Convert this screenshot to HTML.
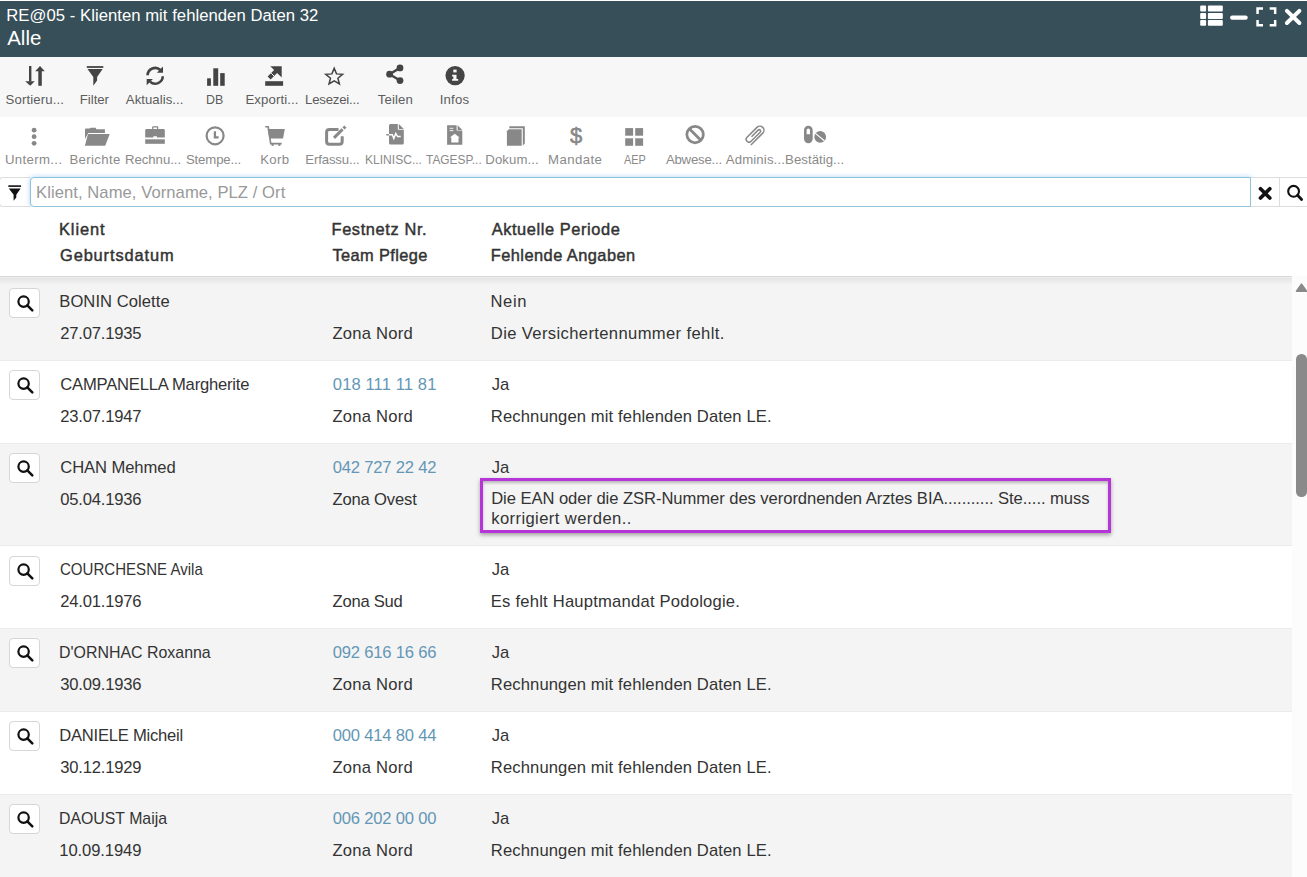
<!DOCTYPE html>
<html><head><meta charset="utf-8"><style>
html,body{margin:0;padding:0;width:1307px;height:877px;overflow:hidden;background:#fff;font-family:"Liberation Sans", sans-serif}
.t{position:absolute;white-space:nowrap}
svg{display:block}
</style></head><body>
<div style="position:absolute;left:0;top:1px;width:1307px;height:56px;background:#374f58"></div>
<div class="t" style="left:6.30px;top:8.20px;font-size:16.7px;line-height:16.7px;color:#fff;font-weight:400;letter-spacing:0.026px;">RE@05 - Klienten mit fehlenden Daten 32</div>
<div class="t" style="left:7.20px;top:28.20px;font-size:20.4px;line-height:20.4px;color:#fff;font-weight:400;letter-spacing:0.046px;">Alle</div>
<svg style="position:absolute;left:1195px;top:0" width="112" height="35" viewBox="0 0 112 35" fill="#fff">
<rect x="5.2" y="5.6" width="5.9" height="6" rx="1"/><rect x="5.2" y="12.9" width="5.9" height="6" rx="1"/><rect x="5.2" y="20.1" width="5.9" height="5.6" rx="1"/>
<rect x="12.9" y="5.6" width="14.9" height="6" rx="1"/><rect x="12.9" y="12.9" width="14.9" height="6" rx="1"/><rect x="12.9" y="20.1" width="14.9" height="5.6" rx="1"/>
<rect x="35.1" y="15.4" width="17.6" height="4.3" rx="2"/>
<path d="M61.3 14V7.3H68V9.8H63.8V14z M81.4 14V7.3H74.7V9.8H78.9V14z M61.3 19.9V26.6H68V24.1H63.8V19.9z M81.4 19.9V26.6H74.7V24.1H78.9V19.9z"/>
<path d="M91.9 10.9L104.4 23M104.4 10.9L91.9 23" stroke="#fff" stroke-width="4" stroke-linecap="round"/>
</svg>
<div style="position:absolute;left:0;top:57px;width:1307px;height:60px;background:#f7f7f7"></div>
<div class="t" style="left:5.50px;top:92.90px;font-size:13.2px;line-height:13.2px;color:#5c5c5c;font-weight:400;letter-spacing:0.130px;">Sortieru...</div>
<div class="t" style="left:79.80px;top:92.90px;font-size:13.2px;line-height:13.2px;color:#5c5c5c;font-weight:400;letter-spacing:-0.023px;">Filter</div>
<div class="t" style="left:125.80px;top:92.90px;font-size:13.2px;line-height:13.2px;color:#5c5c5c;font-weight:400;letter-spacing:0.040px;">Aktualis...</div>
<div class="t" style="left:205.66px;top:92.90px;font-size:13.2px;line-height:13.2px;color:#5c5c5c;font-weight:400;transform:scaleX(0.9416);transform-origin:0 0;">DB</div>
<div class="t" style="left:245.40px;top:92.90px;font-size:13.2px;line-height:13.2px;color:#5c5c5c;font-weight:400;letter-spacing:0.114px;">Exporti...</div>
<div class="t" style="left:305.10px;top:92.90px;font-size:13.2px;line-height:13.2px;color:#5c5c5c;font-weight:400;letter-spacing:-0.209px;">Lesezei...</div>
<div class="t" style="left:377.70px;top:92.90px;font-size:13.2px;line-height:13.2px;color:#5c5c5c;font-weight:400;letter-spacing:0.156px;">Teilen</div>
<div class="t" style="left:439.70px;top:92.90px;font-size:13.2px;line-height:13.2px;color:#5c5c5c;font-weight:400;letter-spacing:0.201px;">Infos</div>
<div class="t" style="left:4.90px;top:152.90px;font-size:13.2px;line-height:13.2px;color:#8a8a8a;font-weight:400;letter-spacing:0.367px;">Unterm...</div>
<div class="t" style="left:69.40px;top:152.90px;font-size:13.2px;line-height:13.2px;color:#8a8a8a;font-weight:400;letter-spacing:0.351px;">Berichte</div>
<div class="t" style="left:124.90px;top:152.90px;font-size:13.2px;line-height:13.2px;color:#8a8a8a;font-weight:400;letter-spacing:-0.023px;">Rechnu...</div>
<div class="t" style="left:185.90px;top:152.90px;font-size:13.2px;line-height:13.2px;color:#8a8a8a;font-weight:400;letter-spacing:-0.134px;">Stempe...</div>
<div class="t" style="left:260.20px;top:152.90px;font-size:13.2px;line-height:13.2px;color:#8a8a8a;font-weight:400;letter-spacing:0.326px;">Korb</div>
<div class="t" style="left:305.30px;top:152.90px;font-size:13.2px;line-height:13.2px;color:#8a8a8a;font-weight:400;letter-spacing:-0.148px;">Erfassu...</div>
<div class="t" style="left:365.19px;top:152.90px;font-size:13.2px;line-height:13.2px;color:#8a8a8a;font-weight:400;transform:scaleX(0.9138);transform-origin:0 0;">KLINISC...</div>
<div class="t" style="left:426.10px;top:152.90px;font-size:13.2px;line-height:13.2px;color:#8a8a8a;font-weight:400;transform:scaleX(0.9012);transform-origin:0 0;">TAGESP...</div>
<div class="t" style="left:485.30px;top:152.90px;font-size:13.2px;line-height:13.2px;color:#8a8a8a;font-weight:400;letter-spacing:0.100px;">Dokum...</div>
<div class="t" style="left:548.00px;top:152.90px;font-size:13.2px;line-height:13.2px;color:#8a8a8a;font-weight:400;letter-spacing:0.419px;">Mandate</div>
<div class="t" style="left:623.50px;top:152.90px;font-size:13.2px;line-height:13.2px;color:#8a8a8a;font-weight:400;transform:scaleX(0.8273);transform-origin:0 0;">AEP</div>
<div class="t" style="left:665.90px;top:152.90px;font-size:13.2px;line-height:13.2px;color:#8a8a8a;font-weight:400;letter-spacing:-0.218px;">Abwese...</div>
<div class="t" style="left:725.80px;top:152.90px;font-size:13.2px;line-height:13.2px;color:#8a8a8a;font-weight:400;letter-spacing:0.130px;">Adminis...</div>
<div class="t" style="left:785.10px;top:152.90px;font-size:13.2px;line-height:13.2px;color:#8a8a8a;font-weight:400;letter-spacing:0.042px;">Bestätig...</div>
<div style="position:absolute;left:-1px;top:177px;width:31px;height:30px;box-sizing:border-box;border:1px solid #ddd;border-right:none;border-radius:4px 0 0 4px;background:#fff"></div>
<div style="position:absolute;left:29.5px;top:177px;width:1221px;height:30px;box-sizing:border-box;border:1px solid #8fc3d9;border-radius:4px 0 0 4px;background:#fff;box-shadow:0 0 5px rgba(102,175,233,.55)"></div>
<div class="t" style="left:36.00px;top:184.70px;font-size:16.6px;line-height:16.6px;color:#999;font-weight:400;letter-spacing:0.069px;">Klient, Name, Vorname, PLZ / Ort</div>
<div style="position:absolute;left:1251px;top:177px;width:29px;height:30px;box-sizing:border-box;border:1px solid #ddd;border-left:none;background:#fff"></div>
<div style="position:absolute;left:1279px;top:177px;width:30px;height:30px;box-sizing:border-box;border:1px solid #ddd;background:#fff"></div>
<div style="position:absolute;left:0;top:207px;width:1292px;height:69px;background:#fff"></div>
<div class="t" style="left:59.00px;top:220.70px;font-size:16.4px;line-height:16.4px;color:#333;font-weight:400;letter-spacing:0.911px;-webkit-text-stroke:0.45px #333;">Klient</div>
<div class="t" style="left:60.00px;top:246.80px;font-size:16.4px;line-height:16.4px;color:#333;font-weight:400;letter-spacing:0.881px;-webkit-text-stroke:0.45px #333;">Geburtsdatum</div>
<div class="t" style="left:331.50px;top:220.70px;font-size:16.4px;line-height:16.4px;color:#333;font-weight:400;letter-spacing:0.618px;-webkit-text-stroke:0.45px #333;">Festnetz Nr.</div>
<div class="t" style="left:332.50px;top:246.80px;font-size:16.4px;line-height:16.4px;color:#333;font-weight:400;letter-spacing:0.371px;-webkit-text-stroke:0.45px #333;">Team Pflege</div>
<div class="t" style="left:491.70px;top:220.70px;font-size:16.4px;line-height:16.4px;color:#333;font-weight:400;letter-spacing:0.584px;-webkit-text-stroke:0.45px #333;">Aktuelle Periode</div>
<div class="t" style="left:490.70px;top:246.80px;font-size:16.4px;line-height:16.4px;color:#333;font-weight:400;letter-spacing:0.459px;-webkit-text-stroke:0.45px #333;">Fehlende Angaben</div>
<div style="position:absolute;left:0;top:278px;width:1292px;height:83px;box-sizing:border-box;background:#f4f4f4;border-bottom:1px solid #ebebeb"></div>
<div style="position:absolute;left:9px;top:288px;width:31px;height:30px;box-sizing:border-box;border:1px solid #d6d6d6;border-radius:4px;background:#fff"></div>
<svg style="position:absolute;left:9px;top:288px" width="31" height="30" viewBox="0 0 31 30"><circle cx="14.6" cy="13.6" r="5.2" fill="none" stroke="#111" stroke-width="2.2"/><path d="M18.3 17.4 L23.3 22.4" stroke="#111" stroke-width="2.6" stroke-linecap="round"/></svg>
<div class="t" style="left:59.30px;top:293.50px;font-size:16.6px;line-height:16.6px;color:#333;font-weight:400;letter-spacing:0.049px;">BONIN Colette</div>
<div class="t" style="left:60.30px;top:325.60px;font-size:16.6px;line-height:16.6px;color:#333;font-weight:400;letter-spacing:-0.213px;">27.07.1935</div>
<div class="t" style="left:332.50px;top:325.60px;font-size:16.6px;line-height:16.6px;color:#333;font-weight:400;letter-spacing:0.216px;">Zona Nord</div>
<div class="t" style="left:490.50px;top:293.50px;font-size:16.6px;line-height:16.6px;color:#333;font-weight:400;letter-spacing:0.634px;">Nein</div>
<div class="t" style="left:490.80px;top:325.60px;font-size:16.6px;line-height:16.6px;color:#333;font-weight:400;letter-spacing:0.369px;">Die Versichertennummer fehlt.</div>
<div style="position:absolute;left:0;top:361px;width:1292px;height:83px;box-sizing:border-box;background:#ffffff;border-bottom:1px solid #ebebeb"></div>
<div style="position:absolute;left:9px;top:370px;width:31px;height:30px;box-sizing:border-box;border:1px solid #d6d6d6;border-radius:4px;background:#fff"></div>
<svg style="position:absolute;left:9px;top:370px" width="31" height="30" viewBox="0 0 31 30"><circle cx="14.6" cy="13.6" r="5.2" fill="none" stroke="#111" stroke-width="2.2"/><path d="M18.3 17.4 L23.3 22.4" stroke="#111" stroke-width="2.6" stroke-linecap="round"/></svg>
<div class="t" style="left:60.30px;top:376.50px;font-size:16.6px;line-height:16.6px;color:#333;font-weight:400;letter-spacing:-0.213px;">CAMPANELLA Margherite</div>
<div class="t" style="left:60.30px;top:408.60px;font-size:16.6px;line-height:16.6px;color:#333;font-weight:400;letter-spacing:-0.213px;">23.07.1947</div>
<div class="t" style="left:332.80px;top:376.50px;font-size:16.6px;line-height:16.6px;color:#6497b6;font-weight:400;letter-spacing:0.101px;">018 111 11 81</div>
<div class="t" style="left:332.50px;top:408.60px;font-size:16.6px;line-height:16.6px;color:#333;font-weight:400;letter-spacing:0.216px;">Zona Nord</div>
<div class="t" style="left:491.70px;top:376.50px;font-size:16.6px;line-height:16.6px;color:#333;font-weight:400;">Ja</div>
<div class="t" style="left:490.80px;top:408.60px;font-size:16.6px;line-height:16.6px;color:#333;font-weight:400;letter-spacing:0.123px;">Rechnungen mit fehlenden Daten LE.</div>
<div style="position:absolute;left:0;top:444px;width:1292px;height:102px;box-sizing:border-box;background:#f4f4f4;border-bottom:1px solid #ebebeb"></div>
<div style="position:absolute;left:9px;top:453px;width:31px;height:30px;box-sizing:border-box;border:1px solid #d6d6d6;border-radius:4px;background:#fff"></div>
<svg style="position:absolute;left:9px;top:453px" width="31" height="30" viewBox="0 0 31 30"><circle cx="14.6" cy="13.6" r="5.2" fill="none" stroke="#111" stroke-width="2.2"/><path d="M18.3 17.4 L23.3 22.4" stroke="#111" stroke-width="2.6" stroke-linecap="round"/></svg>
<div class="t" style="left:60.30px;top:459.50px;font-size:16.6px;line-height:16.6px;color:#333;font-weight:400;letter-spacing:-0.086px;">CHAN Mehmed</div>
<div class="t" style="left:60.30px;top:491.60px;font-size:16.6px;line-height:16.6px;color:#333;font-weight:400;letter-spacing:-0.213px;">05.04.1936</div>
<div class="t" style="left:332.80px;top:459.50px;font-size:16.6px;line-height:16.6px;color:#6497b6;font-weight:400;letter-spacing:-0.207px;">042 727 22 42</div>
<div class="t" style="left:332.50px;top:491.60px;font-size:16.6px;line-height:16.6px;color:#333;font-weight:400;letter-spacing:-0.162px;">Zona Ovest</div>
<div class="t" style="left:491.70px;top:459.50px;font-size:16.6px;line-height:16.6px;color:#333;font-weight:400;">Ja</div>
<div style="position:absolute;left:0;top:546px;width:1292px;height:83px;box-sizing:border-box;background:#ffffff;border-bottom:1px solid #ebebeb"></div>
<div style="position:absolute;left:9px;top:556px;width:31px;height:30px;box-sizing:border-box;border:1px solid #d6d6d6;border-radius:4px;background:#fff"></div>
<svg style="position:absolute;left:9px;top:556px" width="31" height="30" viewBox="0 0 31 30"><circle cx="14.6" cy="13.6" r="5.2" fill="none" stroke="#111" stroke-width="2.2"/><path d="M18.3 17.4 L23.3 22.4" stroke="#111" stroke-width="2.6" stroke-linecap="round"/></svg>
<div class="t" style="left:60.30px;top:561.50px;font-size:16.6px;line-height:16.6px;color:#333;font-weight:400;transform:scaleX(0.9072);transform-origin:0 0;">COURCHESNE Avila</div>
<div class="t" style="left:60.30px;top:593.60px;font-size:16.6px;line-height:16.6px;color:#333;font-weight:400;letter-spacing:-0.213px;">24.01.1976</div>
<div class="t" style="left:332.50px;top:593.60px;font-size:16.6px;line-height:16.6px;color:#333;font-weight:400;letter-spacing:-0.233px;">Zona Sud</div>
<div class="t" style="left:491.70px;top:561.50px;font-size:16.6px;line-height:16.6px;color:#333;font-weight:400;">Ja</div>
<div class="t" style="left:490.80px;top:593.60px;font-size:16.6px;line-height:16.6px;color:#333;font-weight:400;letter-spacing:0.217px;">Es fehlt Hauptmandat Podologie.</div>
<div style="position:absolute;left:0;top:629px;width:1292px;height:83px;box-sizing:border-box;background:#f4f4f4;border-bottom:1px solid #ebebeb"></div>
<div style="position:absolute;left:9px;top:638px;width:31px;height:30px;box-sizing:border-box;border:1px solid #d6d6d6;border-radius:4px;background:#fff"></div>
<svg style="position:absolute;left:9px;top:638px" width="31" height="30" viewBox="0 0 31 30"><circle cx="14.6" cy="13.6" r="5.2" fill="none" stroke="#111" stroke-width="2.2"/><path d="M18.3 17.4 L23.3 22.4" stroke="#111" stroke-width="2.6" stroke-linecap="round"/></svg>
<div class="t" style="left:59.34px;top:644.50px;font-size:16.6px;line-height:16.6px;color:#333;font-weight:400;transform:scaleX(0.9597);transform-origin:0 0;">D'ORNHAC Roxanna</div>
<div class="t" style="left:60.30px;top:676.60px;font-size:16.6px;line-height:16.6px;color:#333;font-weight:400;letter-spacing:-0.213px;">30.09.1936</div>
<div class="t" style="left:332.80px;top:644.50px;font-size:16.6px;line-height:16.6px;color:#6497b6;font-weight:400;letter-spacing:-0.207px;">092 616 16 66</div>
<div class="t" style="left:332.50px;top:676.60px;font-size:16.6px;line-height:16.6px;color:#333;font-weight:400;letter-spacing:0.216px;">Zona Nord</div>
<div class="t" style="left:491.70px;top:644.50px;font-size:16.6px;line-height:16.6px;color:#333;font-weight:400;">Ja</div>
<div class="t" style="left:490.80px;top:676.60px;font-size:16.6px;line-height:16.6px;color:#333;font-weight:400;letter-spacing:0.123px;">Rechnungen mit fehlenden Daten LE.</div>
<div style="position:absolute;left:0;top:712px;width:1292px;height:83px;box-sizing:border-box;background:#ffffff;border-bottom:1px solid #ebebeb"></div>
<div style="position:absolute;left:9px;top:721px;width:31px;height:30px;box-sizing:border-box;border:1px solid #d6d6d6;border-radius:4px;background:#fff"></div>
<svg style="position:absolute;left:9px;top:721px" width="31" height="30" viewBox="0 0 31 30"><circle cx="14.6" cy="13.6" r="5.2" fill="none" stroke="#111" stroke-width="2.2"/><path d="M18.3 17.4 L23.3 22.4" stroke="#111" stroke-width="2.6" stroke-linecap="round"/></svg>
<div class="t" style="left:59.30px;top:727.50px;font-size:16.6px;line-height:16.6px;color:#333;font-weight:400;letter-spacing:-0.241px;">DANIELE Micheil</div>
<div class="t" style="left:60.30px;top:759.60px;font-size:16.6px;line-height:16.6px;color:#333;font-weight:400;letter-spacing:-0.213px;">30.12.1929</div>
<div class="t" style="left:332.80px;top:727.50px;font-size:16.6px;line-height:16.6px;color:#6497b6;font-weight:400;letter-spacing:-0.207px;">000 414 80 44</div>
<div class="t" style="left:332.50px;top:759.60px;font-size:16.6px;line-height:16.6px;color:#333;font-weight:400;letter-spacing:0.216px;">Zona Nord</div>
<div class="t" style="left:491.70px;top:727.50px;font-size:16.6px;line-height:16.6px;color:#333;font-weight:400;">Ja</div>
<div class="t" style="left:490.80px;top:759.60px;font-size:16.6px;line-height:16.6px;color:#333;font-weight:400;letter-spacing:0.123px;">Rechnungen mit fehlenden Daten LE.</div>
<div style="position:absolute;left:0;top:795px;width:1292px;height:83px;box-sizing:border-box;background:#f4f4f4;border-bottom:1px solid #ebebeb"></div>
<div style="position:absolute;left:9px;top:804px;width:31px;height:30px;box-sizing:border-box;border:1px solid #d6d6d6;border-radius:4px;background:#fff"></div>
<svg style="position:absolute;left:9px;top:804px" width="31" height="30" viewBox="0 0 31 30"><circle cx="14.6" cy="13.6" r="5.2" fill="none" stroke="#111" stroke-width="2.2"/><path d="M18.3 17.4 L23.3 22.4" stroke="#111" stroke-width="2.6" stroke-linecap="round"/></svg>
<div class="t" style="left:59.34px;top:810.50px;font-size:16.6px;line-height:16.6px;color:#333;font-weight:400;transform:scaleX(0.9551);transform-origin:0 0;">DAOUST Maija</div>
<div class="t" style="left:59.30px;top:842.60px;font-size:16.6px;line-height:16.6px;color:#333;font-weight:400;letter-spacing:-0.102px;">10.09.1949</div>
<div class="t" style="left:332.80px;top:810.50px;font-size:16.6px;line-height:16.6px;color:#6497b6;font-weight:400;letter-spacing:-0.207px;">006 202 00 00</div>
<div class="t" style="left:332.50px;top:842.60px;font-size:16.6px;line-height:16.6px;color:#333;font-weight:400;letter-spacing:0.216px;">Zona Nord</div>
<div class="t" style="left:491.70px;top:810.50px;font-size:16.6px;line-height:16.6px;color:#333;font-weight:400;">Ja</div>
<div class="t" style="left:490.80px;top:842.60px;font-size:16.6px;line-height:16.6px;color:#333;font-weight:400;letter-spacing:0.123px;">Rechnungen mit fehlenden Daten LE.</div>
<div style="position:absolute;left:480px;top:478px;width:631px;height:55px;box-sizing:border-box;border:3px solid #b535d8;box-shadow:0 2px 4px rgba(0,0,0,.35), inset 0 2px 3px rgba(0,0,0,.25)"></div>
<div class="t" style="left:491.20px;top:490.80px;font-size:16.6px;line-height:16.6px;color:#333;font-weight:400;letter-spacing:-0.061px;">Die EAN oder die ZSR-Nummer des verordnenden Arztes BIA........... Ste..... muss</div>
<div class="t" style="left:491.20px;top:510.90px;font-size:16.6px;line-height:16.6px;color:#333;font-weight:400;letter-spacing:0.406px;">korrigiert werden..</div>
<div style="position:absolute;left:0;top:276px;width:1292px;height:1px;background:#d9d9d9"></div><div style="position:absolute;left:0;top:277px;width:1292px;height:8px;background:linear-gradient(rgba(0,0,0,.075),rgba(0,0,0,0))"></div>
<div style="position:absolute;left:1292px;top:276px;width:15px;height:601px;background:#fcfcfc"></div>
<svg style="position:absolute;left:1292px;top:276px" width="15" height="20"><path d="M4.5 15.3L9.5 8.2L14.5 15.3z" fill="#8a8a8a" stroke="#8a8a8a" stroke-width="1.6" stroke-linejoin="round"/></svg>
<div style="position:absolute;left:1296px;top:353.7px;width:10.5px;height:143.3px;border-radius:5.25px;background:#8a8a8a"></div>
<svg style="position:absolute;left:0;top:0" width="1307" height="210" viewBox="0 0 1307 210">
<g fill="#444">
<!-- sort -->
<rect x="29" y="66" width="2.4" height="15.5"/>
<path d="M25.2 81.3H34.8L30.2 85.8z"/>
<rect x="38.3" y="70.8" width="3.5" height="15"/>
<path d="M35.2 71.2H44.8L40 65.9z"/>
<!-- filter -->
<rect x="86.8" y="66.1" width="16.5" height="1.8"/>
<path d="M87.5 69H102.6L97.1 77V80.6L93.3 85.8V77z"/>
<!-- db -->
<rect x="207.1" y="78.3" width="3.8" height="7.5"/>
<rect x="213.3" y="68.3" width="4.9" height="17.5"/>
<rect x="220.2" y="73.1" width="4.5" height="12.7"/>
<!-- export -->
<rect x="265.2" y="81.2" width="17.9" height="4.6"/>
<path d="M270.3 66.2H281.7V77.6z"/>
<path d="M267.6 76.4L274.6 69.4L277.6 72.4L270.6 79.4z"/>
<!-- share -->
<circle cx="400" cy="67.9" r="3.4"/><circle cx="389.6" cy="74.2" r="3.4"/><circle cx="400" cy="80.6" r="3.4"/>
<path d="M400 67.9L389.6 74.2L400 80.6" fill="none" stroke="#444" stroke-width="2.4"/>
<!-- info -->
<circle cx="455.1" cy="75.6" r="9.6"/>
</g>
<!-- refresh -->
<g fill="none" stroke="#444" stroke-width="2.6">
<path d="M147.6 75.3A7.6 7.6 0 0 1 160.4 70"/>
<path d="M162.8 76.3A7.6 7.6 0 0 1 150 81.6"/>
</g>
<path d="M163 66.6V72.8H156.8z" fill="#444"/>
<path d="M146.7 85.2V79H152.9z" fill="#444"/>
<!-- star -->
<path d="M334.2 68.2L336.5 73.9L342.6 74.3L337.9 78.2L339.4 84L334.2 80.8L329 84L330.5 78.2L325.8 74.3L331.9 73.9z" fill="none" stroke="#444" stroke-width="1.5" stroke-linejoin="miter"/>
<!-- info i -->
<g fill="#f7f7f7">
<rect x="453.3" y="69.6" width="3.3" height="2.8"/>
<path d="M452.1 74.7H456.5V78.9H458.2V80.8H452.1V78.9H453.3V76.4H452.1z"/>
</g>

<g fill="#888">
<!-- dots -->
<circle cx="34.1" cy="130.2" r="2.4"/><circle cx="34.1" cy="136.7" r="2.4"/><circle cx="34.1" cy="143.3" r="2.4"/>
<!-- folder -->
<path d="M85 145.8V129.6Q85 128.4 86.2 128.4H89.5L90.7 127.8H95.8L96.3 129.3H104.9V132.9H88.3L85 139z"/>
<path d="M88 134.1H109.7L105.2 145.8H84.9z"/>
<!-- briefcase -->
<path d="M152.1 129V127.2Q152.1 126.2 153.1 126.2H157.3Q158.3 126.2 158.3 127.2V129H157.1V127.5H153.3V129z"/>
<path d="M145.2 137.6V130.3Q145.2 129 146.5 129H163.5Q164.8 129 164.8 130.3V137.6H156.9V136.2H153.4V137.6z"/>
<rect x="145.2" y="139.3" width="19.6" height="4.5"/>
<!-- cart -->
<path d="M267.6 129H284.8L283 138.6H269.3z"/>
<rect x="271.6" y="143.6" width="2" height="2.3"/><rect x="278.4" y="143.6" width="2" height="2.3"/>
<!-- file-medical -->
<path d="M389 125.6Q389 124.1 390.5 124.1H397.8V129.8H403.8V142.9Q403.8 144.4 402.3 144.4H390.5Q389 144.4 389 142.9z"/>
<path d="M398.8 124.1L403.8 129.1H398.8z"/>
<!-- file-house -->
<path d="M447.1 125.2H456.6V130.5H462.3V144.8H447.1z"/>
<path d="M457.6 125.2L462.3 129.9H457.6z"/>
<!-- book -->
<path d="M509.3 126.2H524.8V143.6L522.8 145.6V128.2H509.3z"/>
<path d="M506.9 131.2L508.8 129.2H521.7V145.8H506.9z"/>
<!-- grid -->
<rect x="625.2" y="128.1" width="7.9" height="7.6"/><rect x="635.2" y="128.1" width="7.9" height="7.6"/>
<rect x="625.2" y="138.3" width="7.9" height="7.5"/><rect x="635.2" y="138.3" width="7.9" height="7.5"/>
<!-- pills -->
<path d="M804 130.2A4.35 4.35 0 0 1 812.7 130.2V138.8A4.35 4.35 0 0 1 804 138.8z M806.6 134.2V130.2A1.7 1.7 0 0 1 810 130.2V134.2z" fill-rule="evenodd"/>
<circle cx="820.2" cy="136.9" r="5.9"/>
</g>
<g fill="none" stroke="#888">
<!-- cart handle -->
<path d="M265.2 126.7H268.2L270.7 143.6H281.7" stroke-width="1.6"/>
<!-- clock -->
<circle cx="215.1" cy="135.8" r="8.5" stroke-width="2.2"/>
<path d="M214.9 131.2V137.3H218.6" stroke-width="2.3"/>
<!-- edit -->
<path d="M338.5 129.4H329.5Q326.6 129.4 326.6 132.3V141.3Q326.6 144.3 329.5 144.3H339.3Q342.2 144.3 342.2 141.3V136.2" stroke-width="3"/>
<!-- ban -->
<circle cx="695.1" cy="134.5" r="8.25" stroke-width="2.75"/>
<path d="M689.3 128.7L700.9 140.3" stroke-width="2.75"/>
<!-- paperclip -->
<g transform="translate(754.9,135.2) rotate(45) scale(1.17)"><path d="M-1.1 3V-5A1.25 1.25 0 0 1 1.4 -5V6A2.45 2.45 0 0 1 -3.5 6V-6A3.5 3.5 0 0 1 3.5 -6V8.4" stroke-width="1.3"/></g>
</g>
<!-- edit pen -->
<path d="M334 137.9L342.6 129.3" stroke="#888" stroke-width="3"/>
<path d="M343.5 128.4L345.4 126.6" stroke="#888" stroke-width="3"/>
<!-- pulse -->
<path d="M386.2 134.8H392.4L393.8 138.6L395.8 133.4L397.6 136.5H400.7" fill="none" stroke="#fff" stroke-width="1.4"/>
<path d="M386.2 134.8H389" fill="none" stroke="#888" stroke-width="1.4"/>
<!-- file-house details -->
<g fill="#fff">
<rect x="449.6" y="127.8" width="3.7" height="0.9"/><rect x="449.6" y="130.2" width="3.7" height="0.9"/>
<path d="M454.7 133.8L459.6 137.6H458.5V142.4H451.3V137.6H449.9z"/>
</g>
<path d="M815.4 133.4L824.4 140.7" stroke="#fff" stroke-width="1.2"/>
<text x="576" y="143.3" font-family="Liberation Sans" font-weight="400" font-size="22" fill="#888" stroke="#888" stroke-width="0.6" text-anchor="middle">$</text>

<path d="M271.2 73.2L274.2 76.2" stroke="#f7f7f7" stroke-width="1"/>
<!-- search bar icons -->
<path d="M1260.5 188.7L1269.8 198M1269.8 188.7L1260.5 198" stroke="#111" stroke-width="3.7" stroke-linecap="round"/>
<circle cx="1293.6" cy="191.3" r="5.4" fill="none" stroke="#111" stroke-width="2.1"/>
<path d="M1297.6 195.3L1301.6 199.4" stroke="#111" stroke-width="2.8" stroke-linecap="round"/>
<!-- filter icon left -->
<rect x="8.3" y="185.3" width="12.7" height="1.6" fill="#111"/>
<path d="M8.8 188.5H20.6L16.3 194.8V197.6L13.6 200.7V194.8z" fill="#111"/>
</svg>
</body></html>
